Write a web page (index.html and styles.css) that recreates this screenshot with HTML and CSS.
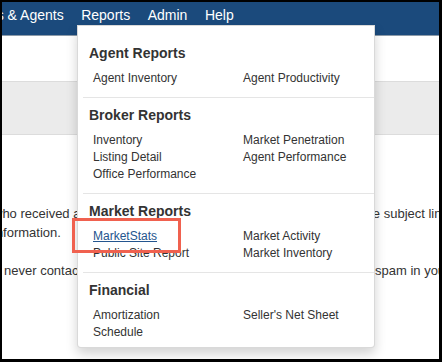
FILE: index.html
```html
<!DOCTYPE html>
<html lang="en">
<head>
<meta charset="utf-8">
<title>Reports</title>
<link rel="stylesheet" href="styles.css">
</head>
<body>
<div class="frame">
  <nav class="navbar">
    <a class="nav-link">Brokers &amp; Agents</a>
    <a class="nav-link">Reports</a>
    <a class="nav-link">Admin</a>
    <a class="nav-link">Help</a>
  </nav>
  <div class="subhead"></div>
  <div class="band"></div>
  <main class="content">
    <div class="line shift"><span class="l1">who received a notification email from the system will see th</span><span class="r">the subject line</span></div>
    <div class="line shift"><span class="l1">information.</span></div>
    <div class="line para"><span class="l3">never contact you directly, so please mark any other messages as</span><span class="r">spam in your inbox</span></div>
  </main>

  <div class="dropdown">
    <section class="sec">
      <h3>Agent Reports</h3>
      <div class="items">
        <a>Agent Inventory</a>
        <a>Agent Productivity</a>
      </div>
    </section>
    <section class="sec">
      <h3>Broker Reports</h3>
      <div class="items">
        <a>Inventory</a>
        <a>Market Penetration</a>
        <a>Listing Detail</a>
        <a>Agent Performance</a>
        <a>Office Performance</a>
      </div>
    </section>
    <section class="sec">
      <h3>Market Reports</h3>
      <div class="items">
        <a class="link">MarketStats</a>
        <a>Market Activity</a>
        <a>Public Site Report</a>
        <a>Market Inventory</a>
      </div>
    </section>
    <section class="sec">
      <h3>Financial</h3>
      <div class="items">
        <a>Amortization Schedule</a>
        <a>Seller's Net Sheet</a>
      </div>
    </section>
  </div>

  <div class="highlight"></div>
</div>
</body>
</html>
```

FILE: styles.css
```css
html, body {
  margin: 0;
  padding: 0;
  background: #000;
}
body {
  width: 442px;
  height: 362px;
  overflow: hidden;
  font-family: "Liberation Sans", Arial, Helvetica, sans-serif;
  color: #333;
}
.frame {
  position: relative;
  margin: 2px 3px 3px 2px;
  width: 437px;
  height: 357px;
  background: #fff;
  overflow: hidden;
}
.navbar {
  box-sizing: border-box;
  height: 34px;
  padding-top: 3px;
  background: #1b4a7c;
  border-bottom: 1px solid #8c9aa8;
  display: flex;
  gap: 17.5px;
  white-space: nowrap;
}
.nav-link {
  color: #fff;
  font-size: 14px;
  line-height: 20px;
}
.nav-link:first-child {
  margin-left: -46.5px;
}
.subhead {
  height: 45px;
  background: #fff;
}
.band {
  height: 52px;
  background: #ebebeb;
  border-top: 1px solid #dcdcdc;
  border-bottom: 1px solid #dcdcdc;
}
.content {
  padding-top: 69px;
  font-size: 13px;
  color: #333;
}
.line {
  display: flex;
  height: 19px;
  line-height: 19px;
  white-space: nowrap;
}
.shift {
  margin-left: -9px;
}
.para {
  margin-top: 19px;
  margin-left: 2px;
}
.l1 {
  flex: none;
  width: 369px;
  overflow: hidden;
}
.l3 {
  flex: none;
  width: 371px;
  overflow: hidden;
}
.r {
  flex: none;
}

.dropdown {
  position: absolute;
  left: 75px;
  top: 23px;
  box-sizing: border-box;
  width: 298px;
  background: #fff;
  border: 1px solid rgba(0, 0, 0, 0.15);
  border-radius: 0 0 4px 4px;
  box-shadow: 0 6px 12px rgba(0, 0, 0, 0.175);
}
.sec {
  margin-left: 5px;
  padding: 7px 0 10px 6px;
}
.sec:first-child {
  padding-top: 17px;
}
.sec + .sec {
  border-top: 1px solid #e5e5e5;
}
.sec:last-child {
  padding-bottom: 6px;
}
.sec h3 {
  margin: 0 0 7px;
  font-size: 14px;
  line-height: 20px;
  font-weight: 700;
  color: #333;
}
.items {
  display: grid;
  grid-template-columns: 112px 112px;
  column-gap: 38px;
  padding-left: 4px;
  font-size: 12px;
  line-height: 17px;
  color: #333;
}
.items .link {
  color: #24558e;
  text-decoration: underline;
}
.highlight {
  position: absolute;
  left: 70px;
  top: 216px;
  box-sizing: border-box;
  width: 109px;
  height: 35px;
  border: 3px solid #f0614f;
}
```
